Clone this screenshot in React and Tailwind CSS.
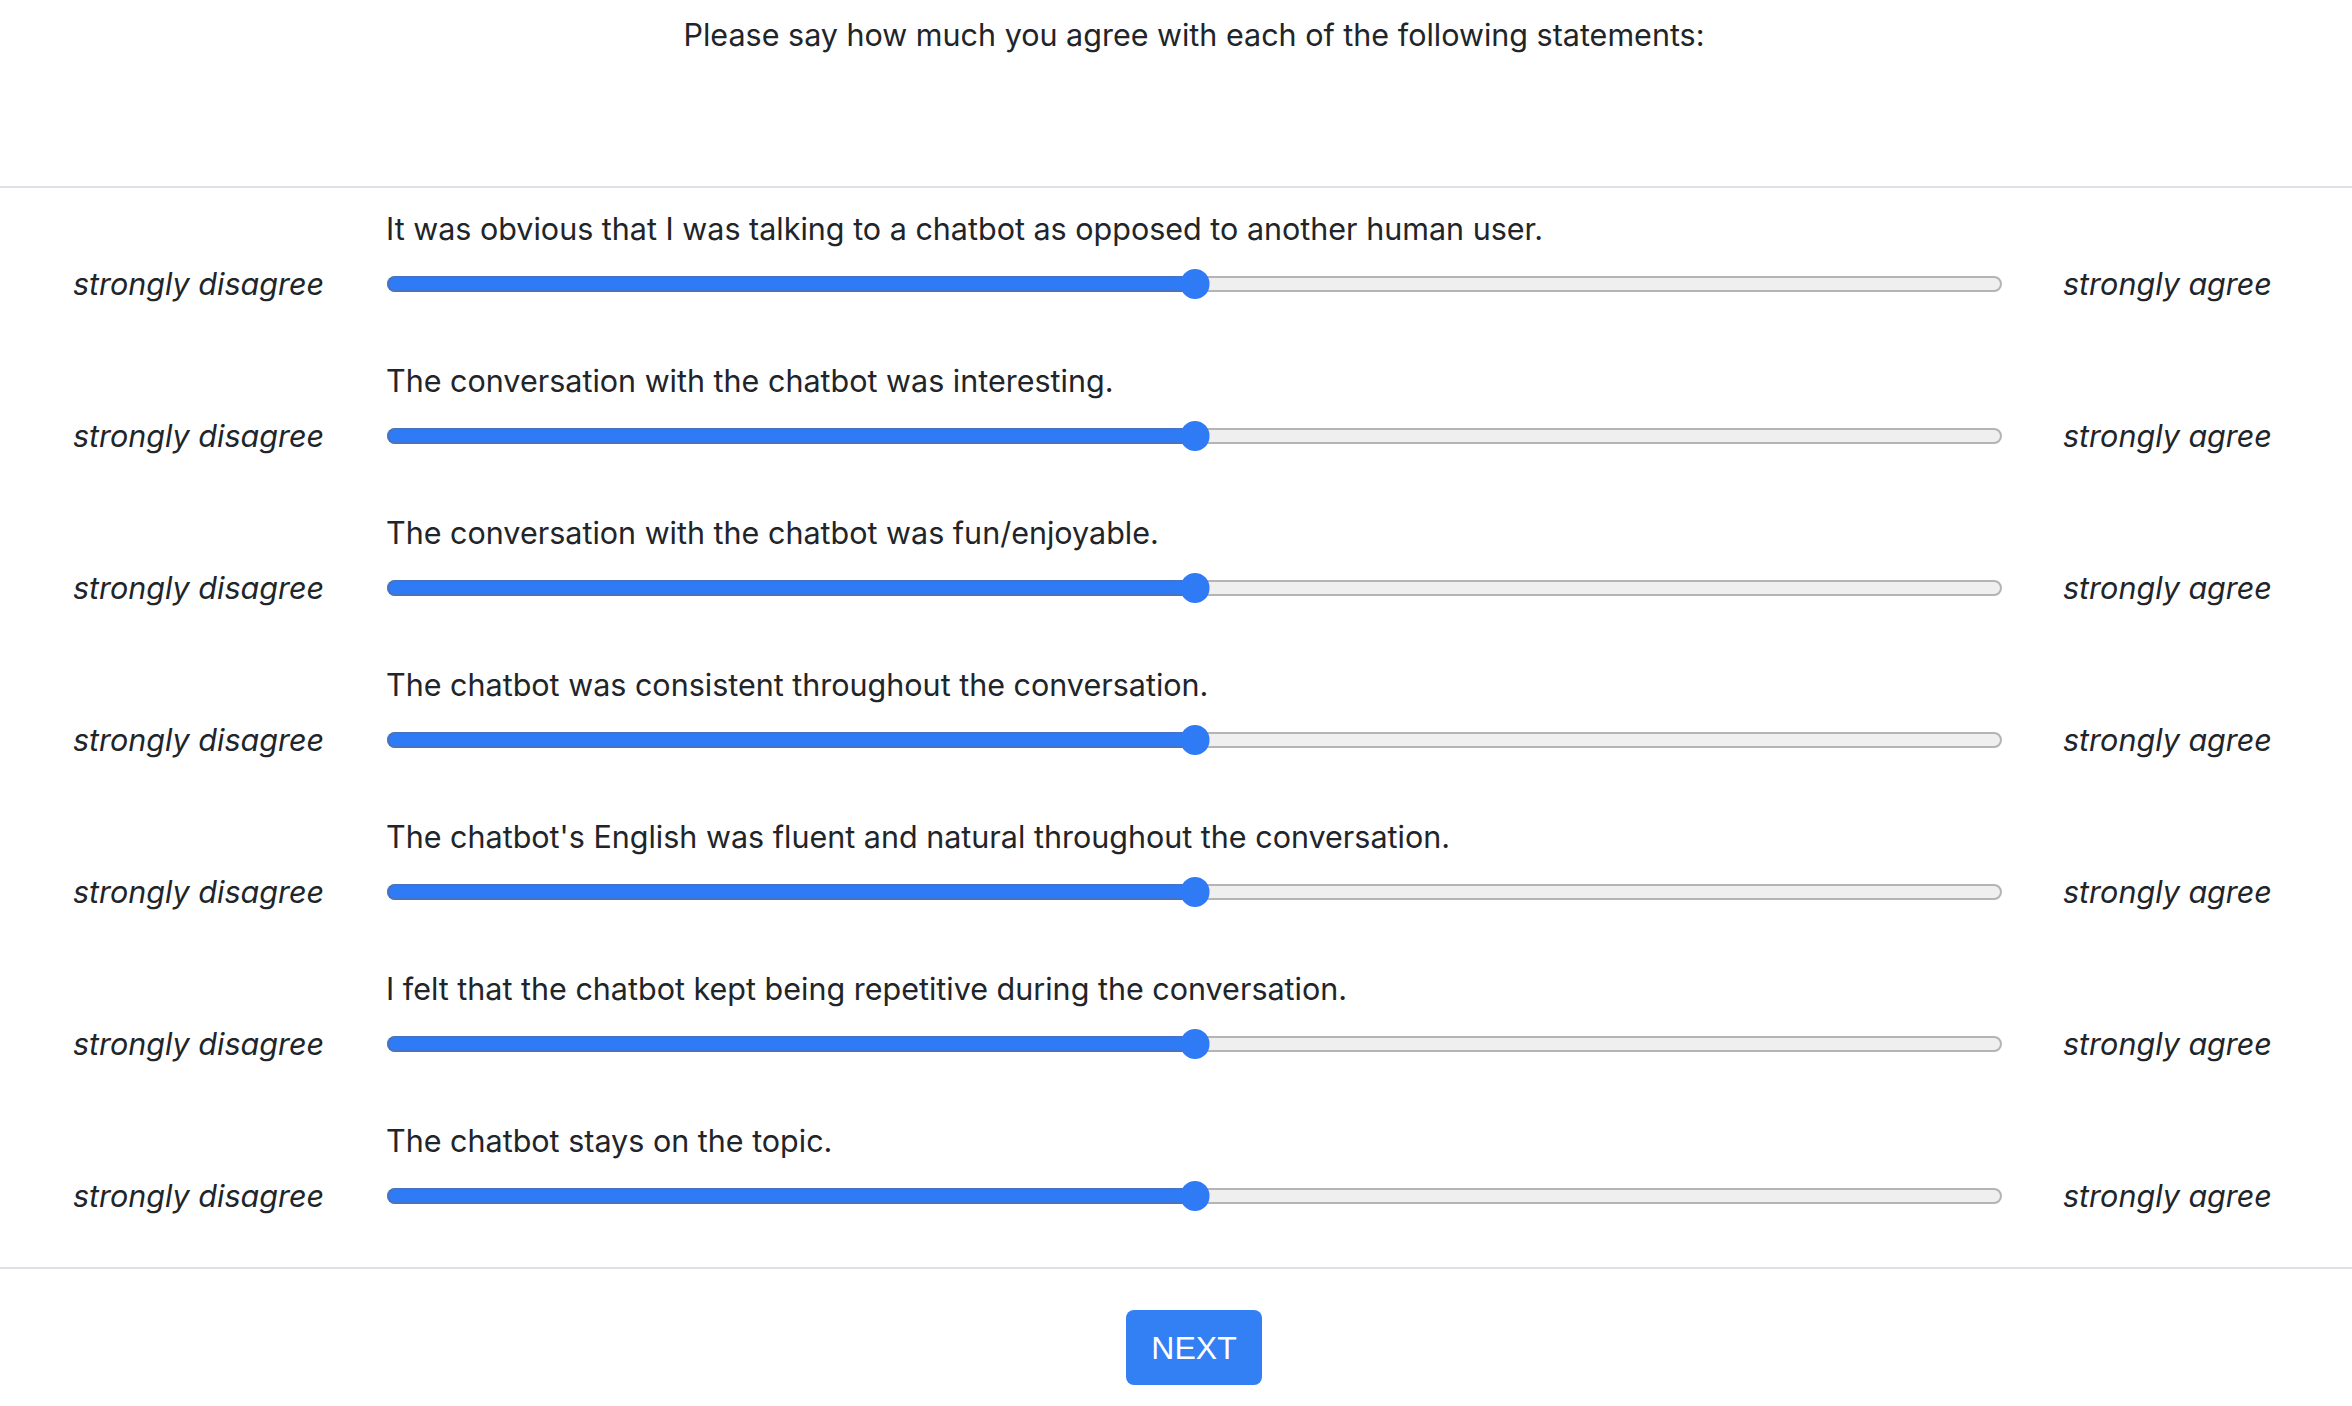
import React from 'react';

const statements = [
  'It was obvious that I was talking to a chatbot as opposed to another human user.',
  'The conversation with the chatbot was interesting.',
  'The conversation with the chatbot was fun/enjoyable.',
  'The chatbot was consistent throughout the conversation.',
  "The chatbot's English was fluent and natural throughout the conversation.",
  'I felt that the chatbot kept being repetitive during the conversation.',
  'The chatbot stays on the topic.',
];

const Slider = ({ value = 50 }) => (
  <div className="relative h-[16px] w-full rounded-full border-2 border-[#b4b4b4] bg-[#efefef]">
    {/* filled part */}
    <div
      className="absolute -left-[2px] -top-[2px] -bottom-[2px] rounded-l-full border-2 border-r-0 border-[#4773c3] bg-[#2f7bf6]"
      style={{ width: `calc(${value}% + 2px)` }}
    ></div>
    <div
      className="absolute top-1/2 h-[30px] w-[29px] -translate-x-1/2 -translate-y-1/2 rounded-full bg-[#2f7bf6]"
      style={{ left: `${value}%` }}
    ></div>
  </div>
);

const Row = ({ text }) => (
  <div className="flex flex-col gap-[10px]">
    <div className="pl-[386px] text-[30.5px] leading-[45px]">{text}</div>
    <div className="grid h-[45px] grid-cols-[387px_1615px_1fr] items-center">
      <div className="pr-[63px] text-right text-[30.5px] italic leading-[45px]">strongly disagree</div>
      <Slider value={50} />
      <div className="pl-[61px] text-[30.5px] italic leading-[45px]">strongly agree</div>
    </div>
  </div>
);

export default function App() {
  return (
    <div className="min-h-screen bg-white text-[#212529]" style={{ fontFamily: 'Inter, "Noto Sans", sans-serif' }}>
      <div className="flex h-[188px] justify-center border-b-2 border-[#dee2e6] pl-[36px] pt-[12px]">
        <p className="text-[30.5px] leading-[45px]">Please say how much you agree with each of the following statements:</p>
      </div>

      <div className="flex flex-col gap-[52px] pb-[49px] pt-[18px]">
        {statements.map((s) => (
          <Row key={s} text={s} />
        ))}
      </div>

      <div className="flex justify-center border-t-2 border-[#dee2e6] pl-[36px] pt-[41px]">
        <button
          className="flex h-[75px] w-[136px] items-center justify-center rounded-[8px] bg-[#3380f5] text-[32px] text-white"
          style={{ fontFamily: '"Liberation Sans", Arial, sans-serif' }}
        >
          NEXT
        </button>
      </div>
    </div>
  );
}
